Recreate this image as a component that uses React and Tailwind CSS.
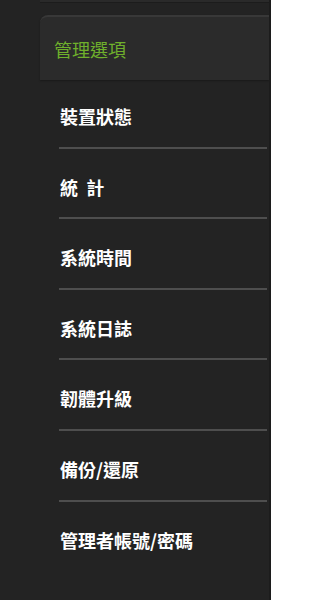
export default function App() {
  const items = ["裝置狀態", "統\u00a0\u00a0計", "系統時間", "系統日誌", "韌體升級", "備份/還原", "管理者帳號/密碼"];
  return (
    <div className="w-[271px] h-[600px] bg-[#232323] flex overflow-hidden" style={{ fontFamily: '"Noto Sans CJK TC", "Noto Sans", sans-serif' }}>
      <div className="w-[40px] shrink-0 bg-[#232323]" />
      <div className="flex-1 flex flex-col">
        <div className="h-[3px] bg-[#2a2a2a] border-b border-[#1c1c1c]" />
        <div className="h-[12px]" />
        <div className="h-[65px] bg-[#2b2b2b] rounded-tl-lg border-t-2 border-[#383838] flex items-center pl-[14px] shadow-[0_1px_2px_rgba(0,0,0,0.3)]">
          <span className="text-[18px] leading-[22px] text-[#6fb02c]">管理選項</span>
        </div>
        <div className="flex flex-col pl-[19px] pr-[2px]">
          {items.map((t, i) => (
            <div
              key={i}
              className={
                (i === 0 ? "pt-[25px] " : "pt-[27px] ") +
                (i < items.length - 1 ? "pb-[19.6px] border-b-2 border-[#4e4e4e] " : "pb-[20px] ") +
                "pl-px"
              }
            >
              <span className="block text-[18px] leading-[22px] font-bold text-white">{t}</span>
            </div>
          ))}
        </div>
      </div>
      <div className="w-[2px] bg-[#1c1c1c]" />
    </div>
  );
}
